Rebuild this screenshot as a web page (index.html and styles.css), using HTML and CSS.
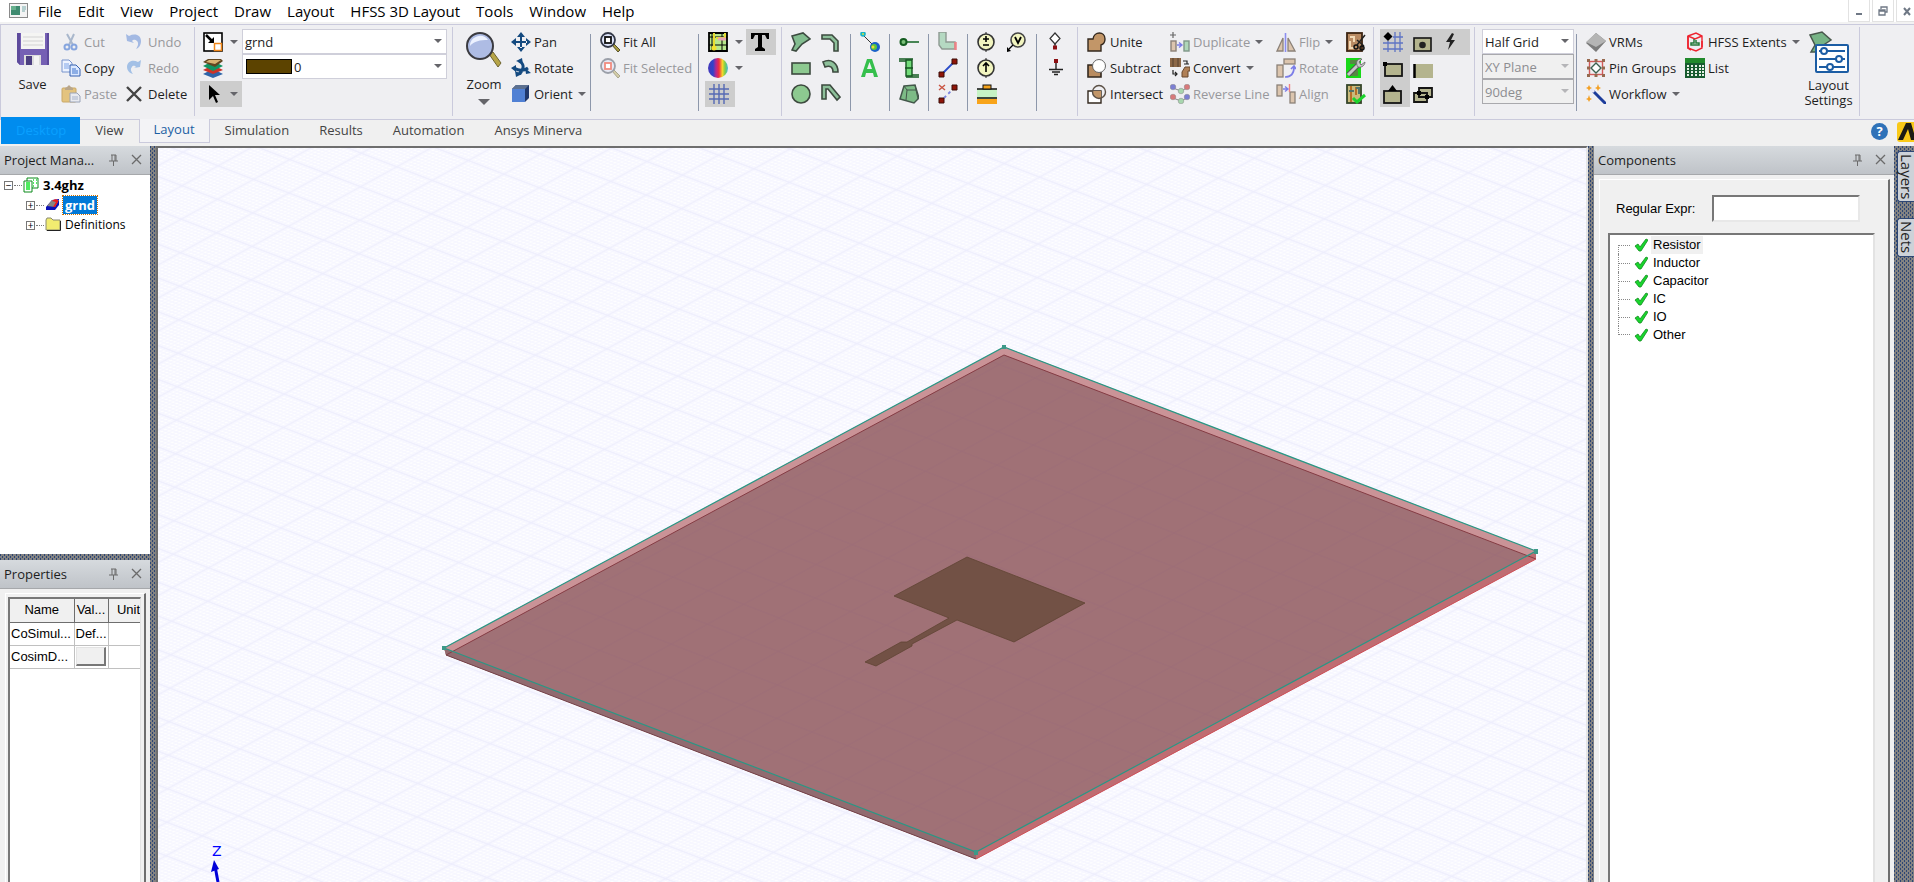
FILE: index.html
```html
<!DOCTYPE html>
<html lang="en">
<head>
<meta charset="utf-8">
<title>HFSS 3D Layout</title>
<link rel="stylesheet" href="styles.css">
</head>
<body>
<header class="menubar">
  <svg class="app-icon" viewBox="0 0 20 16"><rect x=".5" y=".5" width="18" height="14" fill="#f4f4f4" stroke="#8a8a8a"/><rect x="2" y="3" width="9" height="9" fill="#3f8b70"/><rect x="2" y="3" width="5" height="4" fill="#68b08e"/><path d="M13 4h4M13 6h4M13 8h3" stroke="#7aa"/></svg>
  <nav class="menus">
    <button>File</button><button>Edit</button><button>View</button><button>Project</button><button>Draw</button><button>Layout</button><button>HFSS 3D Layout</button><button>Tools</button><button>Window</button><button>Help</button>
  </nav>
  <div class="winbtns">
    <button aria-label="Minimize"><svg viewBox="0 0 10 10"><path d="M2 8h6" stroke="#6f7885" stroke-width="2"/></svg></button>
    <button aria-label="Restore"><svg viewBox="0 0 10 10"><path d="M3 3V1h6v5H7M1 4h6v5H1zM1 5h6" fill="none" stroke="#6f7885" stroke-width="1.300"/></svg></button>
    <button aria-label="Close"><svg viewBox="0 0 10 10"><path d="M2 2l6 7M8 2L2 9" stroke="#6f7885" stroke-width="2"/></svg></button>
  </div>
</header>

<section class="ribbon">
  <div class="group g-edit">
    <button class="big"><svg viewBox="0 0 36 36"><path d="M2 2h32v32H5l-3-3z" fill="#7560b4"/><path d="M2 2h3v32l-3-3zM32 2h2v32h-2z" fill="#5d4a9c"/><rect x="6" y="2" width="24" height="16" fill="#f5f5f3"/><path d="M8 6h20M8 10h20M8 14h20" stroke="#d3d3d3"/><rect x="9" y="24" width="17" height="10" fill="#ddd"/><rect x="11" y="25" width="6" height="9" fill="#4c3f80"/><rect x="19" y="25" width="5" height="9" fill="#f4f4f4"/></svg><span>Save</span></button>
    <div class="col">
      <button class="cmd" disabled><svg viewBox="0 0 20 20"><path d="M6 2l6 11M13 2L8 13" stroke="#a9b7cc" stroke-width="2"/><circle cx="6" cy="15" r="2.5" fill="none" stroke="#86a5de" stroke-width="2"/><circle cx="13" cy="15" r="2.5" fill="none" stroke="#86a5de" stroke-width="2"/></svg>Cut</button>
      <button class="cmd"><svg viewBox="0 0 20 20"><path d="M1 2h7l3 3v9H1z" fill="#edf3ff" stroke="#7994cc"/><path d="M3 6h5M3 8h5M3 10h5" stroke="#7da3e6"/><path d="M9 7h6l4 4v7H9z" fill="#dbe8ff" stroke="#3560b0"/><path d="M11 11h4M11 13h6M11 15h6" stroke="#3d73cc"/></svg>Copy</button>
      <button class="cmd" disabled><svg viewBox="0 0 20 20"><rect x="1" y="4" width="14" height="14" rx="1" fill="#e3c37e" stroke="#c9a868"/><path d="M4 6V4l2-1 2-2 2 2 2 1v2z" fill="#b9a68a"/><path d="M9 9h7l3 3v6H9z" fill="#e8eaf0" stroke="#9aa4b8"/><path d="M11 13h6M11 15h6" stroke="#a8b4cc"/></svg>Paste</button>
    </div>
    <div class="col">
      <button class="cmd" disabled><svg viewBox="0 0 20 20"><path d="M2 9L1 2l3 2c6-3 12-1 12 5 0 4-2 7-5 8 2-3 3-6 1-8-2-2-4-1-5 0l2 2z" fill="#a3b9e3"/></svg>Undo</button>
      <button class="cmd" disabled><svg viewBox="0 0 20 20"><path d="M15 9l1-7-3 2C7 1 2 4 2 9c0 3 2 6 6 7-2-3-3-5-1-7 1-2 3-1 4 0L9 10z" fill="#a3c0e6"/></svg>Redo</button>
      <button class="cmd"><svg viewBox="0 0 20 20"><path d="M2 3l14 14M16 3L2 17" stroke="#444" stroke-width="2.4"/></svg>Delete</button>
    </div>
  </div>

  <div class="group g-layer">
    <div class="col">
      <button class="cmd drop"><svg viewBox="0 0 20 20"><rect x="1" y="1" width="18" height="18" fill="#fff" stroke="#000" stroke-width="1.6"/><path d="M3 3l7 7" stroke="#000" stroke-width="2.5"/><path d="M11 5v6H5z"/><rect x="11.500" y="11.500" width="7" height="7" fill="#fff" stroke="#f0871a" stroke-width="1.5"/></svg><i class="caret"></i></button>
      <button class="cmd"><svg viewBox="0 0 20 20"><path d="M0 16l10 4 10-4-6-3H6z" fill="#2f64a8"/><path d="M0 12l10 4 10-4-6-3H6z" fill="#cb3328"/><path d="M0 8l10 5 10-5-6-3H6z" fill="#129562"/><path d="M0 4l5-3h13l2 2-8 6z" fill="#614620"/><path d="M3 4l3-2h12l-6 4z" fill="#d9b472"/></svg></button>
      <button class="cmd drop on"><svg viewBox="0 0 20 20"><path d="M6 1v15l4-4 3 7 2-1-3-7h5z"/></svg><i class="caret"></i></button>
    </div>
    <div class="combos">
      <label class="combo"><select aria-label="Active layer"><option>grnd</option></select></label>
      <label class="combo color"><span class="swatch"></span><select aria-label="Layer colour"><option>0</option></select></label>
    </div>
  </div>

  <div class="group g-view">
    <button class="big"><svg viewBox="0 0 36 36"><path d="M23 23l4-2 8 11-3 4z" fill="#b7a548" stroke="#6e6430"/><circle cx="14" cy="15" r="13" fill="#aebce4" stroke="#3a3a40" stroke-width="2"/><path d="M4 15a10 10 0 0 1 18-6C14 9 8 10 4 15z" fill="#edf2ff"/></svg><span>Zoom</span><i class="caret wide"></i></button>
    <div class="col">
      <button class="cmd"><svg viewBox="0 0 20 20" fill="#144a80"><path d="M9 4h2v12H9zM4 9h12v2H4zM10 0l4 5H6zM10 20l4-5H6zM0 10l5-4v8zM20 10l-5-4v8z"/></svg>Pan</button>
      <button class="cmd"><svg viewBox="0 0 20 20" fill="#144a80"><path d="M5 3l6-3 1 6zM0 10l5-3v7zM20 15l-5 1-1-6zM5 19l-1-6 7 3z"/><path d="M8 3c6 3 5 9 0 13M3 10c5 3 10 3 14 0" fill="none" stroke="#144a80" stroke-width="3"/></svg>Rotate</button>
      <button class="cmd"><svg viewBox="0 0 20 20"><path d="M1 5l4-4h13v13l-4 4H1z" fill="#20386c"/><path d="M1 5h13v13H1z" fill="#5080d4"/><path d="M1 5l4-4h13l-4 4z" fill="#5c7090"/></svg>Orient<i class="caret"></i></button>
    </div>
    <div class="rule"></div>
    <div class="col pad">
      <button class="cmd"><svg viewBox="0 0 20 20"><path d="M12 13l2-1 6 6-2 2z" fill="#aa9d40" stroke="#55502b"/><circle cx="8" cy="8" r="7" fill="#dfe5fb" stroke="#333847" stroke-width="1.8"/><rect x="5" y="5" width="6" height="6" fill="#fff" stroke="#111" stroke-width="1.8"/></svg>Fit All</button>
      <button class="cmd" disabled><svg viewBox="0 0 20 20"><path d="M12 13l2-1 6 6-2 2z" fill="#d3cda8" stroke="#aaa68f"/><circle cx="8" cy="8" r="7" fill="#e7e9f5" stroke="#9b9fa9" stroke-width="1.8"/><rect x="5" y="5" width="6" height="6" fill="#fff" stroke="#f08c80" stroke-width="1.8"/></svg>Fit Selected</button>
    </div>
    <div class="rule"></div>
    <div class="col near">
      <button class="cmd drop"><svg viewBox="0 0 20 20"><path d="M1 1h18v18H1z" fill="#b6e68b" stroke="#000" stroke-width="1.8"/><path d="M4 1v18M14 1v18M1 5h18M1 13h18" stroke="#000"/><path d="M6 1v15M17 1v5H8" stroke="#e8dc30" stroke-width="2" fill="none"/><path d="M10 7h8" stroke="#e8a5b6" stroke-width="3"/><circle cx="6" cy="16" r="2.500" fill="#f2e12d"/></svg><i class="caret"></i></button>
      <button class="cmd drop"><svg viewBox="0 0 20 20"><defs><linearGradient id="spec"><stop offset="0" stop-color="#4636b8"/><stop offset=".25" stop-color="#2f43ca"/><stop offset=".4" stop-color="#b22890"/><stop offset=".55" stop-color="#f12d3e"/><stop offset=".72" stop-color="#f6d62b"/><stop offset=".85" stop-color="#7ccf48"/><stop offset="1" stop-color="#41b8d8"/></linearGradient></defs><circle cx="10" cy="10" r="10" fill="url(#spec)"/></svg><i class="caret"></i></button>
      <button class="cmd toggle on"><svg viewBox="0 0 20 20"><path d="M5 0v20M10 0v20M15 0v20M0 5h20M0 10h20M0 15h20" stroke="#5569b4" stroke-width="1.400"/></svg></button>
    </div>
    <div class="col">
      <button class="cmd toggle on"><svg viewBox="0 0 20 20"><path d="M1 1h18v6h-2l-2-4h-3v12l3 2v2H5v-2l3-2V3H5L3 7H1z"/></svg></button>
    </div>
  </div>

  <div class="group g-draw">
    <div class="col pad">
      <button class="cmd"><svg viewBox="0 0 20 20"><path d="M1 4L12 1l7 6-8 5-6 7-4-1 3-6z" fill="#83bd90" stroke="#3c4b40" stroke-width="1.600"/></svg></button>
      <button class="cmd"><svg viewBox="0 0 20 20"><rect x="1" y="5" width="18" height="11" fill="#8dc990" stroke="#3d4a3f" stroke-width="1.600"/></svg></button>
      <button class="cmd"><svg viewBox="0 0 20 20"><circle cx="10" cy="10" r="9" fill="#8dc990" stroke="#3d4a3f" stroke-width="1.600"/></svg></button>
    </div>
    <div class="col">
      <button class="cmd"><svg viewBox="0 0 20 20"><path d="M1 3h10l6 6v10h-4v-8L9 7H1z" fill="#8dc09a" stroke="#3d4a3f" stroke-width="1.600"/></svg></button>
      <button class="cmd"><svg viewBox="0 0 20 20"><path d="M2 4c8-4 15 1 15 10h-5c0-5-3-7-8-5z" fill="#8dc09a" stroke="#3d4a3f" stroke-width="1.600"/></svg></button>
      <button class="cmd"><svg viewBox="0 0 20 20"><path d="M1 15V1h8l10 12-3 3L7 5H5v10z" fill="#8dc09a" stroke="#3d4a3f" stroke-width="1.600"/></svg></button>
    </div>
    <div class="rule"></div>
    <div class="col pad">
      <button class="cmd"><svg viewBox="0 0 20 20"><path d="M3 3l11 11" stroke="#333"/><circle cx="3" cy="2" r="2.800" fill="#18b3c8"/><circle cx="3" cy="2" r="1" fill="#d8e23c"/><circle cx="15" cy="15" r="5" fill="#1a62c8"/><circle cx="14" cy="15" r="3" fill="#58c83e"/><circle cx="13" cy="15" r="1.500" fill="#f1d834"/></svg></button>
      <button class="cmd"><svg viewBox="0 0 20 20"><path d="M1 19L7 1h5l6 18h-4l-1-4H6l-1 4zM7 11h5L9.500 4z" fill="#35bf4d" fill-rule="evenodd"/></svg></button>
    </div>
    <div class="rule"></div>
    <div class="col pad">
      <button class="cmd"><svg viewBox="0 0 20 20"><path d="M8 10h12" stroke="#1e6a2d" stroke-width="1.600"/><circle cx="4.500" cy="10" r="3" fill="#7abf78" stroke="#145c20" stroke-width="2"/></svg></button>
      <button class="cmd"><svg viewBox="0 0 20 20"><path d="M0 1h14M0 3h8M10 17h10M7 19h13" stroke="#135b20" stroke-width="1.500"/><path d="M7 2h6v16H7z" fill="#72db79" stroke="#145420" stroke-width="1.400"/><path d="M6 10h8" stroke="#145420" stroke-width="1.500"/></svg></button>
      <button class="cmd"><svg viewBox="0 0 20 20"><path d="M5 2l11-1 4 13-5 5L1 15z" fill="#7dbb86" stroke="#43564a" stroke-width="1.500"/><path d="M5 2l3 4-1 10M8 6h9l2 9M16 1l1 5" fill="none" stroke="#43564a"/></svg></button>
    </div>
    <div class="rule"></div>
    <div class="col pad">
      <button class="cmd"><svg viewBox="0 0 20 20"><path d="M1 0h7v10h9v7H4l-3-4z" fill="#b5d9c2" stroke="#8e9a92" stroke-width="1.400"/><path d="M17.500 10v8" stroke="#ee8286" stroke-width="2.500"/></svg></button>
      <button class="cmd"><svg viewBox="0 0 20 20"><path d="M3 17L17 3" stroke="#2b4cc8" stroke-width="1.800"/><path d="M14 1h5v5h-5zM1 14h5v5H1z" fill="#8f1408" stroke="#3b0c08"/></svg></button>
      <button class="cmd"><svg viewBox="0 0 20 20"><path d="M6 14l8-8" stroke="#7a83e0" stroke-width="1.800" stroke-dasharray="3 3"/><path d="M14 1h5v5h-5zM1 14h5v5H1z" fill="#8f1408" stroke="#3b0c08"/><path d="M1 1l6 5M7 1L1 6" stroke="#c95443" stroke-width="1.400"/></svg></button>
    </div>
    <div class="rule"></div>
    <div class="col pad">
      <button class="cmd"><svg viewBox="0 0 20 20"><path d="M9 0v20" stroke="#222"/><circle cx="9" cy="10" r="8" fill="#f2f5c0" stroke="#333" stroke-width="1.600"/><path d="M9 4v6M6 7h6M6 13h6" stroke="#000" stroke-width="1.600"/></svg></button>
      <button class="cmd"><svg viewBox="0 0 20 20"><path d="M9 0v20" stroke="#222"/><circle cx="9" cy="10" r="8" fill="#f2f5c0" stroke="#333" stroke-width="1.600"/><path d="M9 6v8M6 8l3-3 3 3" fill="none" stroke="#000" stroke-width="1.600"/></svg></button>
      <button class="cmd"><svg viewBox="0 0 20 20"><rect y="5" width="20" height="10" fill="#c6f3c4"/><path d="M0 5h20M0 14h20" stroke="#111" stroke-width="1.500"/><rect x="6" y="1" width="8" height="4" fill="#f5a31c" stroke="#111"/><rect y="15" width="20" height="5" fill="#f8a41a"/></svg></button>
    </div>
    <div class="col">
      <button class="cmd"><svg viewBox="0 0 20 20"><circle cx="11" cy="8" r="7" fill="#f2f5c0" stroke="#444" stroke-width="1.600"/><path d="M8 5l3 6 3-6" fill="none" stroke="#000" stroke-width="1.800"/><path d="M6 13l-4 4" stroke="#000" stroke-width="1.200"/><path d="M0 20v-5l4 4z"/></svg></button>
    </div>
    <div class="rule"></div>
    <div class="col pad">
      <button class="cmd"><svg viewBox="0 0 20 20"><path d="M9 1l5 5.500-5 5.500-5-5.500z" fill="#fff" stroke="#333" stroke-width="1.200"/><path d="M9 12v4" stroke="#000"/><rect x="7" y="13.500" width="4" height="4" fill="#8c0e12"/></svg></button>
      <button class="cmd"><svg viewBox="0 0 20 20"><path d="M10 4v8" stroke="#222" stroke-width="1.400"/><rect x="8" y="1" width="4" height="4" fill="#8c0e12"/><path d="M3 11.500h14M6 14h8M8 16.500h4" stroke="#222" stroke-width="1.600"/></svg></button>
    </div>
  </div>

  <div class="group g-bool">
    <div class="col">
      <button class="cmd"><svg viewBox="0 0 20 20"><path d="M1 7h5c1-8 12-8 12 0 0 3-1 5-4 6v6H1z" fill="#c29668" stroke="#33281e" stroke-width="1.400"/></svg>Unite</button>
      <button class="cmd"><svg viewBox="0 0 20 20"><path d="M1 7h13v12H1z" fill="#b98c60" stroke="#33281e" stroke-width="1.600"/><circle cx="12" cy="8" r="6.500" fill="#fff" stroke="#666"/></svg>Subtract</button>
      <button class="cmd"><svg viewBox="0 0 20 20"><path d="M1 7h13v12H1z" fill="#fff" stroke="#33281e" stroke-width="1.400"/><path d="M6 7h8v7c-5 1-9-2-8-7z" fill="#c29668"/><circle cx="12" cy="8" r="6.500" fill="none" stroke="#5b5046" stroke-width="1.400"/></svg>Intersect</button>
    </div>
    <div class="col">
      <button class="cmd" disabled><svg viewBox="0 0 20 20"><path d="M3 0v6M0 3h6" stroke="#666" stroke-width="1.200"/><rect x="1" y="9" width="5" height="10" fill="#dcc5ae" stroke="#8b8178" stroke-width="1.400"/><rect x="14" y="9" width="5" height="10" fill="#aed6b8" stroke="#7f9688" stroke-width="1.400"/><path d="M7 13h5M9 10.500l3 2.500-3 2.500" fill="none" stroke="#7b7de8" stroke-width="1.400"/></svg>Duplicate<i class="caret"></i></button>
      <button class="cmd"><svg viewBox="0 0 20 20"><path d="M0 0h11v9H0z" fill="#8c6848"/><path d="M3 0v9M8 0v9" stroke="#54402f"/><path d="M12 19v-5l3-5h5v4h-2v6z" fill="#b08057" stroke="#69492f"/><path d="M13 3h4v3M14 6h5M3 12v4h4M5 14l2 2-2 2" fill="none" stroke="#222" stroke-width="1.200"/></svg>Convert<i class="caret"></i></button>
      <button class="cmd" disabled><svg viewBox="0 0 20 20"><path d="M3 4l8 3 6-3M3 14l8 3 6-3" stroke="#888" fill="none"/><g stroke="#888" stroke-width=".5"><circle cx="3" cy="3" r="2.800" fill="#7c7fd3"/><circle cx="11" cy="7" r="2.800" fill="#a8d6ae"/><circle cx="17" cy="3" r="2.800" fill="#d8797b"/><circle cx="3" cy="13" r="2.800" fill="#d8797b"/><circle cx="11" cy="17" r="2.800" fill="#a8d6ae"/><circle cx="17" cy="13" r="2.800" fill="#7c7fd3"/></g></svg>Reverse Line</button>
    </div>
    <div class="col">
      <button class="cmd" disabled><svg viewBox="0 0 20 20"><path d="M1 19L7 6v13zM19 19L12 6v13z" fill="#dcc5ae" stroke="#8b8178" stroke-width="1.300"/><path d="M9.500 1v19" stroke="#8b8df0" stroke-width="1.600"/></svg>Flip<i class="caret"></i></button>
      <button class="cmd" disabled><svg viewBox="0 0 20 20"><rect x="8" y="1" width="11" height="5" fill="#dcc5ae" stroke="#8b8178" stroke-width="1.300"/><rect x="1" y="7" width="6" height="12" fill="#dcc5ae" stroke="#8b8178" stroke-width="1.300"/><path d="M9 19c6 0 9-4 9-10M15 11l3-3 2 3" fill="none" stroke="#7b7de8" stroke-width="1.700"/></svg>Rotate</button>
      <button class="cmd" disabled><svg viewBox="0 0 20 20"><rect x="1" y="1" width="5" height="11" fill="#dcc5ae" stroke="#8b8178" stroke-width="1.300"/><rect x="14" y="8" width="5" height="11" fill="#dcc5ae" stroke="#8b8178" stroke-width="1.300"/><path d="M13.500 0v8" stroke="#ee8286" stroke-width="1.400"/><path d="M7 5h5M9 2.500L12 5 9 7.500" fill="none" stroke="#7b7de8" stroke-width="1.400"/></svg>Align</button>
    </div>
    <div class="col">
      <button class="cmd"><svg viewBox="0 0 20 20"><rect x="1" y="1" width="15" height="18" fill="#b98a62" stroke="#3c2412" stroke-width="1.800"/><path d="M4 5h4v5M4 9v7h5" fill="none" stroke="#f2d9b5" stroke-width="2"/><path d="M19 3l-8 10M11 8l7 6" stroke="#222" stroke-width="1.500"/><circle cx="10" cy="15" r="2" fill="none" stroke="#111" stroke-width="1.500"/><circle cx="16" cy="16" r="2" fill="none" stroke="#111" stroke-width="1.500"/></svg></button>
      <button class="cmd"><svg viewBox="0 0 20 20"><rect width="15" height="20" fill="#18d818"/><path d="M4 2h8v4H4zM3 12h9v6H3z" fill="#568844"/><path d="M2 17L14 5" stroke="#555" stroke-width="5"/><path d="M2 17L14 5" stroke="#c8c8c8" stroke-width="3"/><path d="M19 4l-4 3-2-3 3-3c-5-1-7 4-4 8 4 1 7-2 7-5z" fill="#c8c8c8" stroke="#666" stroke-width=".8"/></svg></button>
      <button class="cmd"><svg viewBox="0 0 20 20"><rect x="1" y="1" width="14" height="18" fill="#c9ba7c" stroke="#35452a" stroke-width="1.800"/><path d="M5 2v16M10 3v8" stroke="#b4661e" stroke-width="1.800"/><path d="M3 7h5M10 4h3v6" stroke="#52726b" stroke-width="2" fill="none"/><path d="M7 14l4 4 8-7" fill="none" stroke="#1bd32c" stroke-width="3"/></svg></button>
    </div>
  </div>

  <div class="group g-snap">
    <button class="cmd toggle on"><svg viewBox="0 0 20 20"><path d="M5 9v11M12 0v20M17 0v20M10 5h10M0 11h20M0 17h20" stroke="#5f74c4" stroke-width="1.300"/><path d="M5 0l4.500 4.500L5 9 .5 4.500z"/></svg></button>
    <button class="cmd toggle on"><svg viewBox="0 0 20 20"><rect x="1" y="6" width="17" height="13" fill="#b4b48e" stroke="#151515" stroke-width="1.600"/><circle cx="9.500" cy="13" r="3.300" fill="#222"/></svg></button>
    <button class="cmd toggle on"><svg viewBox="0 0 20 20"><path d="M9 1L3 10h4l-2 8 7-10H8l3-6z" fill="#222"/></svg></button>
    <button class="cmd toggle on"><svg viewBox="0 0 20 20"><rect x="2" y="6" width="17" height="12" fill="#b4b48e" stroke="#151515" stroke-width="1.800"/><rect y="4" width="4" height="4"/></svg></button>
    <button class="cmd toggle"><svg viewBox="0 0 20 20"><rect x="1" y="6" width="19" height="14" fill="#b4b48e"/><path d="M1.500 6v14" stroke="#000" stroke-width="2.500"/></svg></button>
    <span></span>
    <button class="cmd toggle on"><svg viewBox="0 0 20 20"><rect x="1" y="7" width="17" height="12" fill="#b4b48e" stroke="#151515" stroke-width="1.800"/><path d="M9.500 1l4.500 6H5z"/></svg></button>
    <button class="cmd toggle"><svg viewBox="0 0 20 20"><path d="M6 4h13v9H6zM1 9h13v9H1z" fill="#b4b48e" stroke="#151515" stroke-width="1.800"/><path d="M6 9h8v4H6z" fill="none" stroke="#151515" stroke-width="1.600"/><path d="M4 7h4v4H4zM12 11h4v4h-4z"/></svg></button>
  </div>

  <div class="group g-set">
    <div class="combos">
      <label class="combo"><select aria-label="Snap grid"><option>Half Grid</option></select></label>
      <label class="combo off"><select aria-label="Plane" disabled><option>XY Plane</option></select></label>
      <label class="combo off"><select aria-label="Angle" disabled><option>90deg</option></select></label>
    </div>
    <div class="rule"></div>
    <div class="col pad">
      <button class="cmd"><svg viewBox="0 0 20 20"><path d="M10 1l10 8-10 11L0 11z" fill="#7b7b7b"/><path d="M10 1l10 8-10 6L0 10z" fill="#b4b4b4"/></svg>VRMs</button>
      <button class="cmd"><svg viewBox="0 0 20 20"><rect x="3.500" y="3.500" width="13" height="13" fill="none" stroke="#d35a5a" stroke-width="1.400"/><path d="M10 5l5 5-5 5-5-5z" fill="#fff" stroke="#3c6150" stroke-width="1.400"/><g fill="#96694f"><rect x="1" y="1" width="3" height="3"/><rect x="16" y="1" width="3" height="3"/><rect x="1" y="16" width="3" height="3"/><rect x="16" y="16" width="3" height="3"/><rect x="8.500" y="1" width="3" height="3"/><rect x="8.500" y="16" width="3" height="3"/><rect x="1" y="8.500" width="3" height="3"/><rect x="16" y="8.500" width="3" height="3"/></g></svg>Pin Groups</button>
      <button class="cmd"><svg viewBox="0 0 20 20"><path d="M7 7l13 13" stroke="#1c3c9a" stroke-width="3"/><path d="M5 5l3 3" stroke="#e9e9f8" stroke-width="3"/><path d="M3 1l1 2 2 1-2 1-1 2-1-2-2-1 2-1zM12 0l1 3 2 1-2 1-1 2-1-2-2-1 2-1zM3 11l1 3 2 1-2 1-1 2-1-2-2-1 2-1z" fill="#f3a024"/></svg>Workflow<i class="caret"></i></button>
    </div>
    <div class="col">
      <button class="cmd"><svg viewBox="0 0 20 20"><path d="M3 4l8-3 6 3v12l-6 3-8-3zM3 4l7 3 7-3M10 7" fill="none" stroke="#ee2430" stroke-width="1.400"/><path d="M3 4v12l3 2M17 9v6" stroke="#ee2430" stroke-width="1.600" fill="none"/><path d="M9 7v4H6v2h8v-2h-3V8" fill="none" stroke="#237a3a" stroke-width="1.500"/></svg>HFSS Extents<i class="caret"></i></button>
      <button class="cmd"><svg viewBox="0 0 20 20"><rect width="20" height="20" fill="#185c30"/><rect y="0" width="20" height="5" fill="#218a2c"/><g fill="#e8f2e8"><path d="M2 7h2v2H2zM6 7h2v2H6zM10 7h2v2h-2zM14 7h2v2h-2zM2 10h2v2H2zM6 10h2v2H6zM10 10h2v2h-2zM14 10h2v2h-2zM2 13h2v2H2zM6 13h2v2H6zM10 13h2v2h-2zM14 13h2v2h-2zM2 16h2v2H2zM6 16h2v2H6zM10 16h2v2h-2zM14 16h2v2h-2zM17 7h2v2h-2zM17 10h2v2h-2zM17 13h2v2h-2zM17 16h2v2h-2z"/></g></svg>List</button>
    </div>
    <button class="big settings"><svg viewBox="0 0 40 42"><path d="M1 4l12-3 9 8-9 6-5 6H2l4-7z" fill="#77b486" stroke="#48574c" stroke-width="1.500"/><rect x="7" y="14" width="32" height="27" rx="1" fill="#fff" stroke="#1c5da4" stroke-width="2"/><path d="M10 20h26M10 28h26M10 36h26" stroke="#1c5da4" stroke-width="2"/><g fill="#fff" stroke="#1c5da4" stroke-width="2"><circle cx="15" cy="20" r="3"/><circle cx="30" cy="28" r="3"/><circle cx="21" cy="36" r="3"/></g></svg><span>Layout<br>Settings</span></button>
  </div>
</section>

<nav class="tabs">
  <button class="tab desktop">Desktop</button><button class="tab">View</button><button class="tab current">Layout</button><button class="tab">Simulation</button><button class="tab">Results</button><button class="tab">Automation</button><button class="tab">Ansys Minerva</button>
  <span class="grow"></span>
  <button class="corner help" aria-label="Help">?</button>
  <button class="corner" aria-label="Ansys"><svg viewBox="0 0 17 20"><path d="M0 3q0-3 3-3h14v20H3q-3 0-3-3z" fill="#f9c918"/><path d="M1 18L9 1h5l5 17h-5L11 7 6 18z" fill="#1c1b14"/></svg></button>
</nav>

<main class="work">
  <aside class="left">
    <section class="pane project">
      <header class="head"><h2>Project Mana...</h2><button aria-label="Pin"><svg viewBox="0 0 12 12"><path d="M3 1h5M4 1v6M7 1v6M8 1v6M1 7h9M5.500 7v5" fill="none" stroke="#6b6b6b"/></svg></button><button aria-label="Close"><svg viewBox="0 0 12 12"><path d="M1 1l9 9M10 1l-9 9" stroke="#6b6b6b" stroke-width="1.300"/></svg></button></header>
      <ul class="tree">
        <li class="root"><span class="box">−</span><i class="dots"></i><svg viewBox="0 0 16 16"><path d="M4 1h11v10H9v4H1V4h3z" fill="#fff" stroke="#0a8a1a"/><path d="M3 6h4M3 8h4M3 10h4M3 12h4M10 3h1M13 3h1M10 6h1M13 6h1M10 9h1" stroke="#14e62a" stroke-width="1.500"/><path d="M4 4h5v7" fill="none" stroke="#0a8a1a"/></svg><b>3.4ghz</b></li>
        <li><span class="box">+</span><i class="dots"></i><svg viewBox="0 0 16 16"><path d="M1 10l6-7 7-1v6l-4 5H1z" fill="#0a10b8"/><path d="M2 9l5-6h7l-4 7z" fill="#8a8480"/><path d="M7 4c3-3 7-2 6 1l-3 5H8l3-5z" fill="#ef1a1a"/></svg><b class="sel">grnd</b></li>
        <li><span class="box">+</span><i class="dots"></i><svg viewBox="0 0 16 16"><path d="M1 3l1-2h4l2 2h7v10H1z" fill="#f1ec70" stroke="#8a8a70"/><path d="M2 13.500h13.500V4" fill="none" stroke="#222"/></svg><span>Definitions</span></li>
      </ul>
    </section>
    <div class="splitter"></div>
    <section class="pane props">
      <header class="head"><h2>Properties</h2><button aria-label="Pin"><svg viewBox="0 0 12 12"><path d="M3 1h5M4 1v6M7 1v6M8 1v6M1 7h9M5.500 7v5" fill="none" stroke="#6b6b6b"/></svg></button><button aria-label="Close"><svg viewBox="0 0 12 12"><path d="M1 1l9 9M10 1l-9 9" stroke="#6b6b6b" stroke-width="1.300"/></svg></button></header>
      <div class="frame"><div class="sheet">
        <table>
          <thead><tr><th>Name</th><th>Val...</th><th>Unit</th></tr></thead>
          <tbody><tr><td>CoSimul...</td><td>Def...</td><td></td></tr><tr><td>CosimD...</td><td><button class="cell" aria-label="Edit value"></button></td><td></td></tr></tbody>
        </table>
      </div></div>
    </section>
  </aside>
  <div class="splitter"></div>

  <section class="viewport">
    <svg viewBox="158 148 1428 734" preserveAspectRatio="xMinYMin slice">
      <defs>
        <pattern id="minor" width="1" height="1" patternUnits="userSpaceOnUse" patternTransform="matrix(3.62 -1.99 3.54 1.36 396 200.300)"><path d="M0 .5h1M.5 0v1" stroke="#f6f6ff" stroke-width=".4"/></pattern>
        <pattern id="major" width="10" height="10" patternUnits="userSpaceOnUse" patternTransform="matrix(3.62 -1.99 3.54 1.36 396 200.300)"><path d="M0 0h10M0 10h10M0 0v10M10 0v10" stroke="#eeeefd" stroke-width=".4"/></pattern>
        <pattern id="shade" width="10" height="10" patternUnits="userSpaceOnUse" patternTransform="matrix(3.62 -1.99 3.54 1.36 396 200.300)"><path d="M0 0h10M0 10h10M0 0v10M10 0v10" stroke="#7c4c80" stroke-width=".4"/></pattern>
      </defs>
      <rect x="158" y="148" width="1428" height="734" fill="#fefeff"/>
      <rect x="158" y="148" width="1428" height="734" fill="url(#minor)"/>
      <rect x="158" y="148" width="1428" height="734" fill="url(#major)"/>
      <path d="M444 648L1004 347l532 204v8L976 859 446 655z" fill="#a07176"/>
      <path d="M444 648L1004 347l532 204v8L976 859 446 655z" fill="url(#shade)" opacity=".08"/>
      <path d="M444 648L1004 347v8L446 655zM1004 347l532 204v8L1004 355z" fill="#ca9397"/>
      <path d="M444 648l532 204v7L446 655z" fill="#916b70"/>
      <path d="M976 852l560-301v8L976 859z" fill="#bf6c72"/>
      <path d="M446 655L1004 355l532 204" fill="none" stroke="#843c44"/>
      <path d="M446 655l530 204" fill="none" stroke="#744048"/>
      <path d="M976 859l560-300" fill="none" stroke="#d05058"/>
      <path d="M444 648L1004 347l532 204-560 301z" fill="none" stroke="#2a9785" stroke-width="1.200"/>
      <path d="M1002 345h4v4h-4zM1534 549h4v5h-4zM442 646h4v4h-4zM974 850h4v5h-4z" fill="#3c9988"/>
      <path d="M967 557l118 46-71 39-57-22-45 24v2l-36 20-11-4 36-20h6l42-24-55-22z" fill="#725145" stroke="#5f4434" stroke-width=".8"/>
      <text x="212" y="856" class="axis">Z</text>
      <path d="M215 866l3 16" stroke="#0000d8" stroke-width="3"/><path d="M214 860l5 9-8 3z" fill="#0000d8"/>
    </svg>
  </section>

  <div class="splitter"></div>
  <aside class="right pane">
    <header class="head"><h2>Components</h2><button aria-label="Pin"><svg viewBox="0 0 12 12"><path d="M3 1h5M4 1v6M7 1v6M8 1v6M1 7h9M5.500 7v5" fill="none" stroke="#6b6b6b"/></svg></button><button aria-label="Close"><svg viewBox="0 0 12 12"><path d="M1 1l9 9M10 1l-9 9" stroke="#6b6b6b" stroke-width="1.300"/></svg></button></header>
    <div class="frame form">
      <div class="field"><label for="expr">Regular Expr:</label><input id="expr" type="text"></div>
      <ul class="parts">
        <li><svg viewBox="0 0 14 14"><path d="M1 8l3-2 2 3 6-8 2 1-7 11H5z" fill="#18d52c" stroke="#128a1f" stroke-width=".8"/></svg><span class="hot">Resistor</span></li>
        <li><svg viewBox="0 0 14 14"><path d="M1 8l3-2 2 3 6-8 2 1-7 11H5z" fill="#18d52c" stroke="#128a1f" stroke-width=".8"/></svg><span>Inductor</span></li>
        <li><svg viewBox="0 0 14 14"><path d="M1 8l3-2 2 3 6-8 2 1-7 11H5z" fill="#18d52c" stroke="#128a1f" stroke-width=".8"/></svg><span>Capacitor</span></li>
        <li><svg viewBox="0 0 14 14"><path d="M1 8l3-2 2 3 6-8 2 1-7 11H5z" fill="#18d52c" stroke="#128a1f" stroke-width=".8"/></svg><span>IC</span></li>
        <li><svg viewBox="0 0 14 14"><path d="M1 8l3-2 2 3 6-8 2 1-7 11H5z" fill="#18d52c" stroke="#128a1f" stroke-width=".8"/></svg><span>IO</span></li>
        <li><svg viewBox="0 0 14 14"><path d="M1 8l3-2 2 3 6-8 2 1-7 11H5z" fill="#18d52c" stroke="#128a1f" stroke-width=".8"/></svg><span>Other</span></li>
      </ul>
    </div>
  </aside>
  <div class="dock"><button>Layers</button><button>Nets</button></div>
</main>
</body>
</html>
```
FILE: styles.css
```css
* { box-sizing: border-box; }
body {
  margin: 0;
  height: 100vh;
  display: flex;
  flex-direction: column;
  overflow: hidden;
  background: #f0f0f0;
  color: #1e1e1e;
  font: 13px/16px "Open Sans", "Noto Sans", sans-serif;
}
button, select, input {
  font: inherit;
  color: inherit;
  background: none;
  border: 0;
  padding: 0;
  margin: 0;
}
svg { display: block; flex: none; }
h2 { margin: 0; font-size: 13px; font-weight: 400; }
ul { list-style: none; margin: 0; padding: 0; }

/* Menu bar */
.menubar {
  display: flex;
  align-items: center;
  height: 24px;
  padding-left: 9px;
  background: #fff;
  border-bottom: 2px solid #f2f2f2;
}
.app-icon { width: 20px; height: 16px; }
.menus { display: flex; gap: 16px; padding-left: 9px; flex: 1; }
.menus button { font-size: 15px; line-height: 22px; color: #000; white-space: nowrap; }
.winbtns { display: flex; gap: 2px; align-self: stretch; overflow: hidden; width: 66px; }
.winbtns button {
  flex: none;
  width: 22px;
  border: 1px solid #e2e2e2;
  border-top: 0;
  display: grid;
  place-items: center;
}
.winbtns svg { width: 10px; height: 10px; }

/* Ribbon */
.ribbon {
  display: flex;
  padding: 2px 0 3px;
  background: #efeff2;
  border: 1px solid #cacadc;
  border-width: 1px 0 1px 1px;
}
.group {
  display: grid;
  flex: none;
  padding-top: 2px;
  padding-bottom: 8px;
  border-right: 1px solid #cacadc;
}
.g-edit { grid-template-columns: 60px 64px 69px; }
.g-layer { grid-template-columns: 42px 205px; padding-left: 5px; padding-right: 5px; }
.g-view { grid-template-columns: 51px 79px 1px 107px 1px 47px 35px; padding-left: 7px; }
.g-draw { grid-template-columns: 39px 29px 1px 38px 1px 38px 1px 38px 1px 39px 29px 1px 40px; }
.g-bool { grid-template-columns: 83px 106px 70px 27px; padding-left: 9px; }
.g-snap { grid-template-columns: repeat(3, 30px); grid-auto-rows: 26px; padding-left: 6px; padding-right: 4px; }
.g-set { grid-template-columns: 94px 1px 108px 118px 56px; padding-left: 7px; }
.col { display: grid; grid-auto-rows: 26px; align-content: start; justify-items: start; }
.pad { padding-left: 9px; }
.near { padding-left: 6px; }
.rule { width: 1px; background: #8d97ab; margin: 5px 0 -3px; }
.cmd { display: flex; align-items: center; gap: 3px; white-space: nowrap; }
.cmd svg { width: 20px; height: 20px; }
.cmd:disabled { color: #98989c; }
.near .cmd, .g-layer .cmd { padding-left: 3px; }
.cmd.drop { gap: 7px; padding-right: 4px; }
.cmd.toggle { width: 30px; padding: 0 0 0 4px; }
.g-snap .cmd.toggle { padding-left: 3px; }
.on { background: #cdcdcd; }
.caret {
  border: 4px solid transparent;
  border-top-color: #65656a;
  border-bottom: 0;
  margin-left: 2px;
}
.drop .caret { margin-left: 0; }
.caret.wide { border-width: 6px; border-bottom: 0; margin: 7px 0 0; }
.big { display: flex; flex-direction: column; align-items: center; align-self: start; line-height: 15px; }
.big svg { width: 36px; height: 36px; margin: 2px 0 10px; }
.g-edit .big { padding-left: 3px; }
.g-view .big { padding-right: 3px; }
.settings svg { width: 40px; height: 42px; margin-bottom: 5px; }
.settings { padding-right: 5px; }
.combos { display: flex; flex-direction: column; }
.combo {
  position: relative;
  display: flex;
  align-items: center;
  height: 25px;
  background: #fff;
  border: 1px solid #cfcfda;
}
.g-set .combo { width: 92px; }
.combo select { appearance: none; flex: 1; min-width: 0; height: 22px; padding: 0 16px 0 2px; }
.combo::after {
  content: "";
  position: absolute;
  right: 4px;
  top: 9px;
  border: 4px solid transparent;
  border-top-color: #65656a;
  border-bottom: 0;
}
.swatch { width: 46px; height: 15px; margin-left: 3px; background: #5c4300; border: 1px solid #000; }
.combo.off { background: #f0f0f0; border-color: #a9a9ad; color: #8d8d90; }
.combo.off select { opacity: 1; }
.combo.off::after { border-top-color: #b5b5b8; }

/* Ribbon tabs */
.tabs { display: flex; height: 29px; margin-top: -3px; flex: none; padding-left: 1px; }
.tab { height: 27px; padding: 0 15px 2px; color: #444; }
.desktop { background: #008cee; color: #0aa0ff; padding-right: 14px; }
.current {
  height: 24px;
  margin-top: 2px;
  padding: 0 14px 3px;
  background: #f3f3f6;
  border: 1px solid #cacadc;
  border-top: 0;
  color: #1b5fa3;
}
.grow { flex: 1; }
.corner svg { width: 17px; height: 20px; }
.corner { align-self: center; }
.help {
  width: 17px;
  height: 17px;
  margin-right: 9px;
  border-radius: 50%;
  background: #2f72b8;
  color: #fff;
  font-weight: 700;
  line-height: 17px;
}

/* Work area */
.work { flex: 1; display: flex; min-height: 0; }
.left { width: 150px; display: flex; flex-direction: column; flex: none; }
.pane { display: flex; flex-direction: column; min-height: 0; }
.project { flex: 408; background: #fff; }
.props { flex: 322; }
.right { width: 300px; flex: none; }
.splitter, .dock {
  background:
    conic-gradient(at 1px 2px, transparent 75%, #2d4674 0) 0 0 / 4px 4px,
    conic-gradient(at 1px 2px, transparent 75%, #2d4674 0) 2px 2px / 4px 4px,
    #828282;
}
.splitter { flex: 0 0 6px; }
.head {
  display: flex;
  align-items: center;
  height: 29px;
  flex: none;
  padding: 0 7px 0 4px;
  gap: 11px;
  background: linear-gradient(#d6dade, #bfc3c8);
  border-bottom: 1px solid #a6a8ab;
}
.head h2 { flex: 1; white-space: nowrap; }
.head svg { width: 12px; height: 12px; }

.tree { padding: 0 0 0 4px; font-size: 12px; color: #000; }
.tree li { display: flex; align-items: center; height: 20px; padding-left: 22px; }
.tree li.root { padding-left: 0; }
.tree b { font-size: 13px; line-height: 18px; padding: 0 2px; margin-left: 2px; }
.tree li > span:last-child { padding-left: 4px; }
.tree svg { width: 16px; height: 16px; }
.box { width: 9px; height: 9px; border: 1px solid #777; font-size: 10px; line-height: 6px; text-align: center; flex: none; }
.dots { width: 8px; border-top: 1px dotted #777; margin: 0 1px; }
.tree .sel { background: #0078d7; color: #fff; outline: 1px dotted #d07000; }

.frame {
  flex: 1;
  min-height: 0;
  margin: 4px 4px 0 5px;
  border: 1px solid #fff;
  border-right: 2px solid #6e6e6e;
  border-bottom: 0;
}
.sheet {
  height: 100%;
  margin: 3px 3px 0 2px;
  border: 2px solid #777;
  border-right: 1px solid #e3e3e3;
  border-bottom: 0;
  background: #fff;
  overflow: hidden;
}
table { border-collapse: collapse; table-layout: fixed; width: 100%; font: 13px/16px "Liberation Sans", Arial, sans-serif; color: #000; }
th, td { height: 23px; padding: 0 1px; border: 1px solid #c0c0c0; border-width: 0 1px 1px 0; text-align: left; white-space: nowrap; }
th { font-weight: 400; text-align: center; background: #f0f0f0; border-color: #6e6e6e; }
th:nth-child(1) { width: 64px; }
th:nth-child(2) { width: 34px; }
th:nth-child(3), td:nth-child(3) { border-right: 0; }
th:nth-child(3) { text-align: right; padding: 0; }
.cell { display: block; width: 30px; height: 19px; background: #f0f0f0; border: 1px solid #e3e3e3; border-right: 2px solid #777; border-bottom: 2px solid #777; }

.viewport { flex: 1; min-width: 0; border: 2px solid #6e6e6e; border-right-color: #e6e6e6; border-bottom: 0; }
.viewport svg { width: 100%; height: 100%; }
.axis { font: 14px "DejaVu Sans", sans-serif; fill: #0000ff; }

.form { display: flex; flex-direction: column; font: 13px/16px "Liberation Sans", Arial, sans-serif; color: #000; }
.field { display: flex; align-items: center; gap: 17px; padding: 15px 28px 11px 16px; }
.field input { flex: 1; min-width: 0; height: 27px; padding: 0 4px; background: #fff; border: 2px solid #777; border-right-color: #e8e8e8; border-bottom-color: #e8e8e8; }
.parts { flex: 1; margin: 0 13px 0 8px; padding: 1px 0 0 8px; background: #fff; border: 2px solid #777; border-right-color: #e3e3e3; border-bottom: 0; }
.parts li { display: flex; align-items: center; height: 18px; gap: 3px; }
.parts li::before { content: ""; width: 12px; height: 18px; border-left: 1px dotted #888; background: linear-gradient(90deg, #888 50%, transparent 0) 0 50% / 2px 1px repeat-x; }
.parts li:first-child::before { height: 9px; align-self: end; background-position: 0 0; }
.parts li:last-child::before { height: 9px; align-self: start; background-position: 0 100%; }
.parts svg { width: 14px; height: 14px; }
.parts span { padding: 0 2px; line-height: 18px; }
.hot { background: #f0f0f0; }

.dock { flex: 0 0 20px; display: flex; flex-direction: column; align-items: flex-end; gap: 16px; padding-top: 5px; }
.dock button {
  width: 17px;
  padding: 2px 0;
  writing-mode: vertical-rl;
  font-size: 15px;
  line-height: 15px;
  background: #cdd2d8;
  border: 1px solid #2d4674;
  border-right: 0;
  border-radius: 3px 0 0 3px;
}
```
